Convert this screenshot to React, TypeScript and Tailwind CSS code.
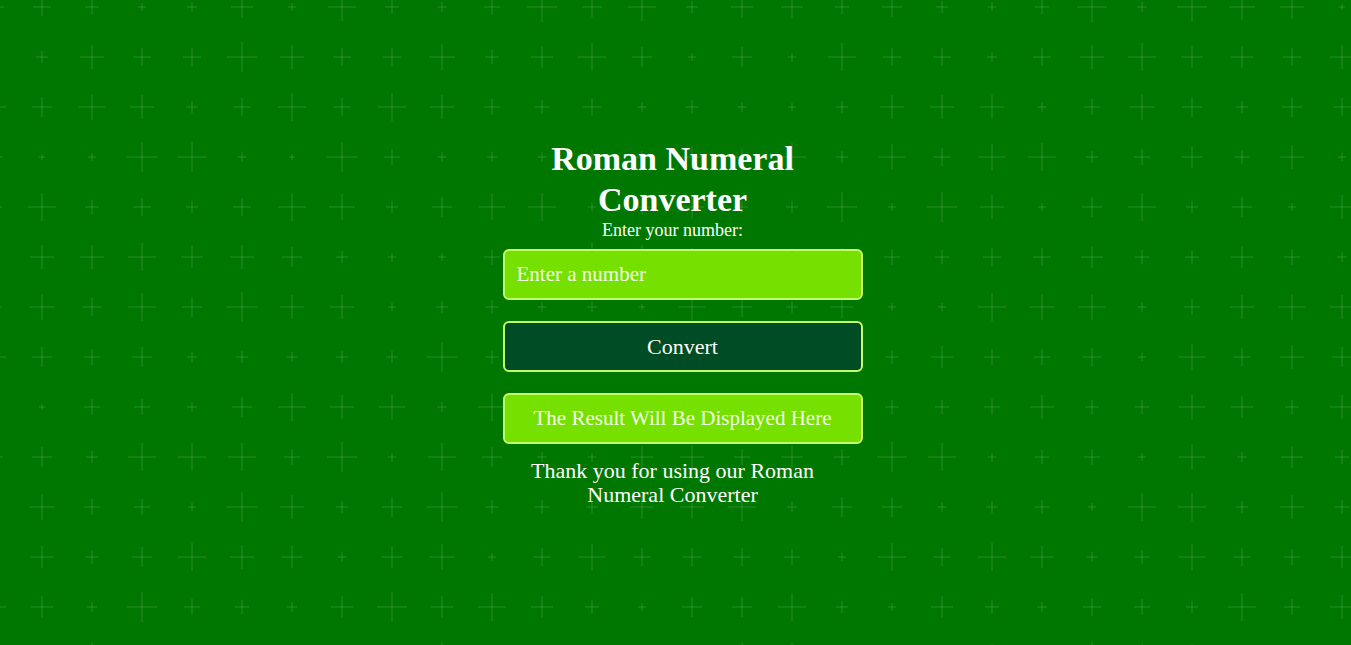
import React from 'react';

// deterministic pseudo-random sizes for the plus pattern
const rand = (seed: number) => {
  const x = Math.sin(seed * 12.9898 + 78.233) * 43758.5453;
  return x - Math.floor(x);
};

const cols = Array.from({ length: 28 }, (_, i) => -8 + i * 50);
const rows = Array.from({ length: 14 }, (_, i) => 7 + i * 50);

const PlusPattern = () => (
  <svg className="absolute inset-0 w-full h-full pointer-events-none" aria-hidden="true">
    {rows.map((y, r) =>
      cols.map((x, c) => {
        const s = 3 + Math.round(rand(r * 31 + c * 7 + 1) * 12);
        return (
          <g key={`${r}-${c}`} stroke="rgba(255,255,255,0.075)" strokeWidth="2">
            <line x1={x - s} y1={y} x2={x + s} y2={y} />
            <line x1={x} y1={y - s} x2={x} y2={y + s} />
          </g>
        );
      })
    )}
  </svg>
);

export default function App() {
  return (
    <div className="relative min-h-screen w-full overflow-hidden bg-[#007700] font-['Liberation_Serif',serif] text-white">
      <PlusPattern />
      <main className="relative z-10 flex min-h-screen items-center justify-center pr-[6px]">
        <div className="w-[340px] flex flex-col items-center text-center">
          <h1 className="text-[34px] font-bold leading-[41px]">Roman Numeral Converter</h1>
          <label htmlFor="number" className="text-[18px] leading-[20px]">Enter your number:</label>
          <div className="w-[340px] flex flex-col gap-[21px] mt-[9px]">
            <input
              id="number"
              type="number"
              placeholder="Enter a number"
              className="w-[360px] h-[51px] rounded-[6px] border-2 border-[#c2ff6b] bg-[#76e000] px-3 text-[21px] text-white placeholder:text-[#f2ffe6] outline-none"
            />
            <button className="w-[360px] h-[51px] rounded-[6px] border-2 border-[#c2ff6b] bg-[#004d25] text-[22px] text-white">
              Convert
            </button>
            <div className="w-[360px] h-[51px] rounded-[6px] border-2 border-[#c2ff6b] bg-[#76e000] flex items-center justify-center text-[21px] text-[#f2ffe6]">
              The Result Will Be Displayed Here
            </div>
          </div>
          <p className="mt-[15px] w-[310px] text-[22px] leading-[24px]">Thank you for using our Roman Numeral Converter</p>
        </div>
      </main>
    </div>
  );
}
